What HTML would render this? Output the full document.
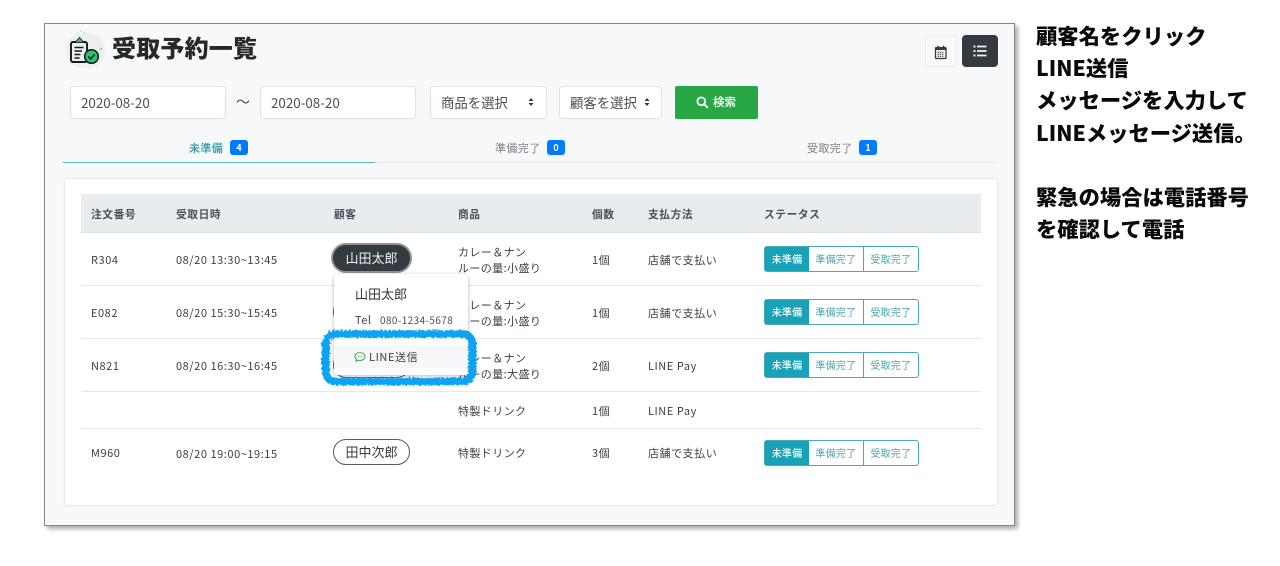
<!DOCTYPE html>
<html lang="ja">
<head>
<meta charset="utf-8">
<title>受取予約一覧</title>
<style>
html,body{margin:0;padding:0;background:#fff;}
body{width:1280px;height:566px;overflow:hidden;position:relative;font-family:"Noto Sans CJK JP","Liberation Sans",sans-serif;color:#343a40;}
.a{position:absolute;white-space:nowrap;}
.frame{left:44px;top:23px;width:969px;height:501px;background:#f7f8fa;border:1.5px solid #858585;box-shadow:3px 3px 4px rgba(0,0,0,.32);}
.input{background:#fff;border:1px solid #dfe2e5;border-radius:4px;height:31px;line-height:30px;font-size:13.4px;color:#495057;box-sizing:content-box;}
.tab{font-size:11px;letter-spacing:.4px;line-height:16px;color:#7c7f83;}
.bdg{display:inline-block;background:#007bff;color:#fff;border-radius:3px;font-size:9px;font-weight:700;text-align:center;line-height:15px;height:15px;}
.card{left:64px;top:178px;width:932px;height:326px;background:#fff;border:1px solid #e6e8eb;border-radius:4px;box-shadow:0 1px 2px rgba(0,0,0,.04);}
.th{font-size:10.7px;font-weight:700;color:#495057;letter-spacing:.6px;line-height:16px;}
.td{font-size:11px;color:#3b4045;letter-spacing:.55px;line-height:16px;}
.p{letter-spacing:.4px;}
.ln{left:81px;width:900px;height:1px;background:#e6e8ea;}
.pill{box-sizing:border-box;left:333px;width:77px;height:26px;border:1px solid #555b61;border-radius:13px;background:#fff;text-align:center;line-height:24px;font-size:13px;color:#343a40;}
.grp{left:764px;width:155px;height:26px;box-sizing:border-box;border:1px solid #4aa9b9;border-radius:3px;background:#fff;display:flex;font-size:10px;letter-spacing:.2px;color:#4aa5b5;line-height:24px;text-align:center;}
.grp b{font-weight:500;width:44.5px;background:#17a2b8;color:#fff;}
.grp span{width:55px;border-right:1px solid #4aa9b9;box-sizing:border-box;}
.grp span:last-child{border:0;}
.note{left:1036px;font-size:21.300px;font-weight:900;line-height:32px;color:#0a0a0a;}
</style>
</head>
<body>
<div class="a frame"></div>

<svg class="a" style="left:62px;top:28px" width="50" height="44" viewBox="0 0 50 44">
  <path d="M4 24C2 13 11 6 23 5c11-1 19 5 20 16 1 12-5 19-20 19C11 40 5 35 4 24z" fill="#eeefef"/>
  <path d="M19 2v2M15 5h2M21 5h2" stroke="#c4c8c8" stroke-width="1"/>
  <rect x="9" y="14" width="16" height="20" rx="2" fill="none" stroke="#15181a" stroke-width="1.900"/>
  <path d="M13 14.500l4.500-5 4.500 5z" fill="#2fbf71" stroke="#15181a" stroke-width=".8"/>
  <path d="M12.500 19.500h9M12.500 23h7.500M12.500 26.500h6M12.500 30h5" stroke="#15181a" stroke-width="1.400"/>
  <circle cx="29.500" cy="28.500" r="6.800" fill="#2cc46a" stroke="#15181a" stroke-width="1.500"/>
  <path d="M26.300 28.500l2.300 2.300 4-4.300" fill="none" stroke="#0d2016" stroke-width="1.600"/>
  <circle cx="39" cy="21" r="1.200" fill="#b9bdc0"/>
</svg>
<div class="a" style="left:112px;top:30px;font-size:24px;font-weight:900;line-height:34px;color:#26292c;letter-spacing:.2px">受取予約一覧</div>

<div class="a" style="left:925px;top:35px;width:32px;height:32px;background:#f8f9fa;border:1px solid #eceef0;border-radius:4px;box-sizing:border-box"></div>
<svg class="a" style="left:934px;top:45px" width="14" height="15" viewBox="0 0 14 15">
  <rect x="1.500" y="2.500" width="10.500" height="11" rx="1" fill="none" stroke="#343a40" stroke-width="1.300"/>
  <rect x="1.500" y="2.500" width="10.500" height="2.500" fill="#343a40"/>
  <path d="M4 .8v2.500M9.500 .8v2.500" stroke="#343a40" stroke-width="1.300"/>
  <path d="M3.500 7.200h6.500M3.500 9.200h6.500M3.500 11.200h6.500" stroke="#343a40" stroke-width="1" stroke-dasharray="1.500 .7"/>
</svg>
<div class="a" style="left:962px;top:35px;width:36px;height:32px;background:#343a40;border-radius:4px"></div>
<svg class="a" style="left:973px;top:44px" width="14" height="14" viewBox="0 0 14 14">
  <path d="M4 2.500h9.500M4 7h9.500M4 11.500h9.500" stroke="#f1f2f3" stroke-width="1.700"/>
  <path d="M.5 2.500h2M.5 7h2M.5 11.500h2" stroke="#f1f2f3" stroke-width="1.900"/>
</svg>

<div class="a input" style="left:70px;top:86px;width:144px;padding-left:10px">2020-08-20</div>
<div class="a" style="left:236px;top:90px;font-size:14px;line-height:24px;color:#495057">〜</div>
<div class="a input" style="left:260px;top:86px;width:144px;padding-left:10px">2020-08-20</div>
<div class="a input" style="left:430px;top:86px;width:105px;padding-left:10px">商品を選択</div>
<div class="a input" style="left:559px;top:86px;width:91px;padding-left:10px">顧客を選択</div>
<svg class="a" style="left:527px;top:97px" width="8" height="10" viewBox="0 0 8 10"><path d="M4 1L6.500 4h-5zM4 9L6.500 6h-5z" fill="#343a40"/></svg>
<svg class="a" style="left:643px;top:97px" width="8" height="10" viewBox="0 0 8 10"><path d="M4 1L6.500 4h-5zM4 9L6.500 6h-5z" fill="#343a40"/></svg>
<div class="a" style="left:675px;top:86px;width:83px;height:33px;background:#28a745;border-radius:2px"></div>
<svg class="a" style="left:696px;top:96px" width="13" height="13" viewBox="0 0 13 13"><circle cx="5.300" cy="5.300" r="3.900" fill="none" stroke="#fff" stroke-width="1.800"/><path d="M8.300 8.300l3.500 3.500" stroke="#fff" stroke-width="2"/></svg>
<div class="a" style="left:713px;top:94px;font-size:11.500px;font-weight:700;line-height:16px;color:#eaf6ec">検索</div>

<div class="a tab" style="left:189px;top:140px;color:#3fa2b4;font-weight:700">未準備</div>
<div class="a bdg" style="left:230px;top:140px;width:18px">4</div>
<div class="a tab" style="left:495px;top:140px">準備完了</div>
<div class="a bdg" style="left:547px;top:140px;width:18px">0</div>
<div class="a tab" style="left:807px;top:140px">受取完了</div>
<div class="a bdg" style="left:859px;top:140px;width:18px">1</div>
<div class="a" style="left:63px;top:162px;width:935px;height:1px;background:#e5e7e9"></div>
<div class="a" style="left:63px;top:162px;width:312px;height:1px;background:#5fb7c6"></div>

<div class="a card"></div>
<div class="a" style="left:81px;top:194px;width:900px;height:39px;background:#e9ecef;border-bottom:1px solid #dee2e6;box-sizing:border-box"></div>
<div class="a th" style="left:91px;top:207px">注文番号</div>
<div class="a th" style="left:176px;top:207px">受取日時</div>
<div class="a th" style="left:334px;top:207px">顧客</div>
<div class="a th" style="left:458px;top:207px">商品</div>
<div class="a th" style="left:592px;top:207px">個数</div>
<div class="a th" style="left:648px;top:207px">支払方法</div>
<div class="a th" style="left:764px;top:207px">ステータス</div>

<div class="a ln" style="top:285px"></div>
<div class="a ln" style="top:338px"></div>
<div class="a ln" style="top:391px"></div>
<div class="a ln" style="top:428px"></div>

<div class="a td" style="left:91px;top:252px">R304</div>
<div class="a td" style="left:176px;top:252px">08/20 13:30~13:45</div>
<div class="a pill" style="top:245px;background:#343a40;color:#eef0f1;box-shadow:0 0 0 2px #8f9397;border-color:#343a40">山田太郎</div>
<div class="a td p" style="left:458px;top:244px">カレー＆ナン</div>
<div class="a td p" style="left:458px;top:260px">ルーの量:小盛り</div>
<div class="a td" style="left:592px;top:252px">1個</div>
<div class="a td" style="left:648px;top:252px">店舗で支払い</div>
<div class="a grp" style="top:246px"><b>未準備</b><span>準備完了</span><span>受取完了</span></div>

<div class="a td" style="left:91px;top:305px">E082</div>
<div class="a td" style="left:176px;top:305px">08/20 15:30~15:45</div>
<div class="a pill" style="top:299px"></div>
<div class="a td p" style="left:458px;top:297px">カレー＆ナン</div>
<div class="a td p" style="left:458px;top:313px">ルーの量:小盛り</div>
<div class="a td" style="left:592px;top:305px">1個</div>
<div class="a td" style="left:648px;top:305px">店舗で支払い</div>
<div class="a grp" style="top:299px"><b>未準備</b><span>準備完了</span><span>受取完了</span></div>

<div class="a td" style="left:91px;top:358px">N821</div>
<div class="a td" style="left:176px;top:358px">08/20 16:30~16:45</div>
<div class="a pill" style="top:352px"></div>
<div class="a td p" style="left:458px;top:350px">カレー＆ナン</div>
<div class="a td p" style="left:458px;top:366px">ルーの量:大盛り</div>
<div class="a td" style="left:592px;top:358px">2個</div>
<div class="a td" style="left:648px;top:358px">LINE Pay</div>
<div class="a grp" style="top:352px"><b>未準備</b><span>準備完了</span><span>受取完了</span></div>

<div class="a td p" style="left:458px;top:403px">特製ドリンク</div>
<div class="a td" style="left:592px;top:403px">1個</div>
<div class="a td" style="left:648px;top:403px">LINE Pay</div>

<div class="a td" style="left:91px;top:445px">M960</div>
<div class="a td" style="left:176px;top:446px">08/20 19:00~19:15</div>
<div class="a pill" style="top:439px">田中次郎</div>
<div class="a td p" style="left:458px;top:445px">特製ドリンク</div>
<div class="a td" style="left:592px;top:445px">3個</div>
<div class="a td" style="left:648px;top:445px">店舗で支払い</div>
<div class="a grp" style="top:440px"><b>未準備</b><span>準備完了</span><span>受取完了</span></div>

<div class="a" style="left:334px;top:274px;width:134px;height:101px;background:#fff;border-radius:4px;box-shadow:0 1px 4px rgba(0,0,0,.28)"></div>
<div class="a" style="left:335px;top:345px;width:132px;height:23px;background:#f6f7f8"></div>
<div class="a" style="left:355px;top:284px;font-size:13px;line-height:19px;color:#30353a">山田太郎</div>
<div class="a" style="left:355px;top:312px;font-size:11px;line-height:16px;color:#3b4045;letter-spacing:.5px">Tel</div>
<div class="a" style="left:380px;top:312px;font-size:10px;line-height:16px;color:#4a4f54;letter-spacing:.4px">080-1234-5678</div>
<svg class="a" style="left:354px;top:351px" width="12" height="12" viewBox="0 0 12 12"><path d="M6 1.500C3.200 1.500 1 3.300 1 5.500c0 1.100.5 2 1.400 2.700L2 10.300l2.200-1.100c.6.200 1.200.300 1.800.300 2.800 0 5-1.800 5-4s-2.200-4-5-4z" fill="none" stroke="#4caf60" stroke-width="1.100"/><path d="M3.800 5.500h.8M5.600 5.500h.8M7.400 5.500h.8" stroke="#4caf60" stroke-width="1"/></svg>
<div class="a" style="left:369px;top:349px;font-size:11px;line-height:16px;color:#3b4045;letter-spacing:.6px">LINE送信</div>

<svg class="a" style="left:315px;top:325px" width="170" height="66" viewBox="0 0 170 66">
  <defs><filter id="r" x="-8%" y="-20%" width="116%" height="140%"><feTurbulence type="fractalNoise" baseFrequency=".5" numOctaves="2" seed="4"/><feDisplacementMap in="SourceGraphic" scale="5"/></filter></defs>
  <g fill="none" stroke="#0aa2f2" filter="url(#r)">
    <rect x="11" y="9" width="146" height="47.500" rx="9" stroke-width="7.500"/>
    <path d="M9 17V49M159 17V49" stroke-width="5"/>
  </g>
</svg>

<div class="a note" style="top:20px">顧客名をクリック</div>
<div class="a note" style="top:52px">LINE送信</div>
<div class="a note" style="top:84px">メッセージを入力して</div>
<div class="a note" style="top:117px">LINEメッセージ送信。</div>
<div class="a note" style="top:181px">緊急の場合は電話番号</div>
<div class="a note" style="top:213px">を確認して電話</div>
</body>
</html>
